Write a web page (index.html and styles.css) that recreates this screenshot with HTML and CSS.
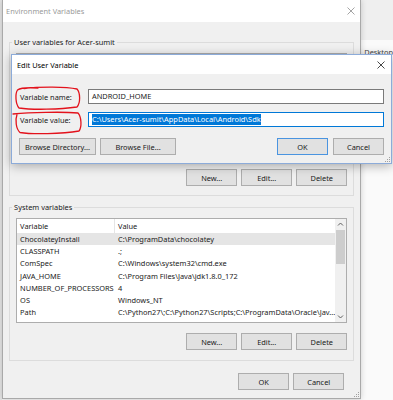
FILE: index.html
```html
<!DOCTYPE html>
<html lang="en">
<head>
    <meta charset="UTF-8">
    <title>Environment Variables</title>
    <link rel="stylesheet" href="styles.css">
</head>
<body>

    <div class="desktop">
        <div class="behind-left"></div>

        <!-- Main "Environment Variables" window (inactive) -->
        <div class="env-window">
            <div class="titlebar">
                <span class="title inactive">Environment Variables</span>
                <svg class="close-x" width="8" height="8" viewBox="0 0 8 8">
                    <path d="M0.5 0.5 L7.5 7.5 M7.5 0.5 L0.5 7.5" stroke="#9a9a9a" stroke-width="0.9"/>
                </svg>
            </div>

            <div class="env-body">
                <div class="group">
                    <div class="group-title">User variables for Acer-sumit</div>
                    <div class="user-list"></div>
                    <div class="btn-row">
                        <button class="btn">New...</button>
                        <button class="btn">Edit...</button>
                        <button class="btn">Delete</button>
                    </div>
                </div>

                <div class="group system-group">
                    <div class="group-title">System variables</div>
                    <div class="sys-list">
                        <div class="list-view">
                            <div class="lv-row lv-head"><span class="c1">Variable</span><span class="c2">Value</span></div>
                            <div class="lv-row selected"><span class="c1">ChocolateyInstall</span><span class="c2">C:\ProgramData\chocolatey</span></div>
                            <div class="lv-row"><span class="c1">CLASSPATH</span><span class="c2">.;</span></div>
                            <div class="lv-row"><span class="c1">ComSpec</span><span class="c2">C:\Windows\system32\cmd.exe</span></div>
                            <div class="lv-row"><span class="c1">JAVA_HOME</span><span class="c2">C:\Program Files\Java\jdk1.8.0_172</span></div>
                            <div class="lv-row"><span class="c1">NUMBER_OF_PROCESSORS</span><span class="c2">4</span></div>
                            <div class="lv-row"><span class="c1">OS</span><span class="c2">Windows_NT</span></div>
                            <div class="lv-row"><span class="c1">Path</span><span class="c2">C:\Python27\;C:\Python27\Scripts;C:\ProgramData\Oracle\Jav...</span></div>
                            <div class="lv-row"><span class="c1">PATHEXT</span><span class="c2">.COM;.EXE;.BAT;.CMD;.VBS;.VBE;.JS;.JSE;.WSF;.WSH;.MSC</span></div>
                        </div>
                        <div class="scrollbar">
                            <svg class="arrow" width="11" height="11" viewBox="0 0 11 11">
                                <path d="M3 6.5 L5.5 4 L8 6.5" fill="none" stroke="#606060" stroke-width="1"/>
                            </svg>
                            <div class="thumb"></div>
                            <div class="track"></div>
                            <svg class="arrow" width="11" height="11" viewBox="0 0 11 11">
                                <path d="M3 4.5 L5.5 7 L8 4.5" fill="none" stroke="#606060" stroke-width="1"/>
                            </svg>
                        </div>
                    </div>
                    <div class="btn-row">
                        <button class="btn">New...</button>
                        <button class="btn">Edit...</button>
                        <button class="btn">Delete</button>
                    </div>
                </div>

                <div class="footer">
                    <button class="btn">OK</button>
                    <button class="btn">Cancel</button>
                </div>
            </div>

            <svg class="grip" width="5" height="5" viewBox="0 0 5 5">
                <rect x="4" y="0" width="1" height="1" fill="#a0a0a0"/>
                <rect x="2" y="2" width="1" height="1" fill="#a0a0a0"/>
                <rect x="4" y="2" width="1" height="1" fill="#a0a0a0"/>
                <rect x="0" y="4" width="1" height="1" fill="#a0a0a0"/>
                <rect x="2" y="4" width="1" height="1" fill="#a0a0a0"/>
                <rect x="4" y="4" width="1" height="1" fill="#a0a0a0"/>
            </svg>
        </div>

        <!-- Whatever window sits behind on the right -->
        <div class="behind-right">
            <div class="behind-top"></div>
            <div class="behind-item">Desktop</div>
        </div>
    </div>

    <!-- Modal "Edit User Variable" dialog on top -->
    <div class="edit-dialog">
        <div class="dlg-title">
            <span class="title">Edit User Variable</span>
            <svg class="close-x" width="8" height="8" viewBox="0 0 8 8">
                <path d="M0.5 0.5 L7.5 7.5 M7.5 0.5 L0.5 7.5" stroke="#333" stroke-width="0.9"/>
            </svg>
        </div>
        <div class="dlg-body">
            <div class="field">
                <label>Variable name:</label>
                <div class="textbox">ANDROID_HOME</div>
            </div>
            <div class="field">
                <label>Variable value:</label>
                <div class="textbox focused"><span class="sel">C:\Users\Acer-sumit\AppData\Local\Android\Sdk</span></div>
            </div>
            <div class="dlg-buttons">
                <button class="btn btn-wide">Browse Directory...</button>
                <button class="btn btn-file">Browse File...</button>
                <button class="btn btn-default">OK</button>
                <button class="btn">Cancel</button>
            </div>
        </div>
        <svg class="grip" width="5" height="5" viewBox="0 0 5 5">
            <rect x="4" y="0" width="1" height="1" fill="#a0a0a0"/>
            <rect x="2" y="2" width="1" height="1" fill="#a0a0a0"/>
            <rect x="4" y="2" width="1" height="1" fill="#a0a0a0"/>
            <rect x="0" y="4" width="1" height="1" fill="#a0a0a0"/>
            <rect x="2" y="4" width="1" height="1" fill="#a0a0a0"/>
            <rect x="4" y="4" width="1" height="1" fill="#a0a0a0"/>
        </svg>
    </div>

    <!-- Red hand-drawn annotation circles -->
    <svg class="marks" width="393" height="400" viewBox="0 0 393 400">
        <path d="M24 88.5 C40 86.5, 66 86.5, 77 89 C80.5 93, 80.5 103, 77 107 C60 109.5, 32 110, 19 108 C15.5 104, 15 94, 17.5 90 C21 87.5, 30 87.5, 38 88"
              fill="none" stroke="#e3121c" stroke-width="1.3" stroke-linecap="round"/>
        <path d="M13 114 C30 112.5, 62 111.5, 78 113 C81.5 117, 82 127, 79 131 C62 134, 32 134.5, 20 132.5 C16 129, 15 120, 17 114.5"
              fill="none" stroke="#e3121c" stroke-width="1.3" stroke-linecap="round"/>
    </svg>

</body>
</html>
```

FILE: styles.css
```css
/* --- Page / desktop --- */
body {
    margin: 0;
    width: 393px;
    height: 400px;
    overflow: hidden;
    position: relative;
    font-family: "Noto Sans", "Liberation Sans", sans-serif;
    font-size: 7.4px;
    color: #1a1a1a;
    background-color: #f2f2f2;
}

.desktop {
    display: flex;
    height: 400px;
}

.behind-left {
    width: 3px;
    background-color: #e4e4e4;
}

.behind-right {
    flex: 1;
    display: flex;
    flex-direction: column;
    background-color: #fafafa;
}

.behind-top {
    height: 40px;
    background-color: #efefef;
}

.behind-item {
    padding: 7px 0 0 3px;
    color: #444;
    white-space: nowrap;
}

/* --- Environment Variables window --- */
.env-window {
    position: relative;
    width: 360px;
    height: 399px;
    box-sizing: border-box;
    border: 1px solid #a9a9a9;
    border-top: none;
    background-color: #f0f0f0;
    display: flex;
    flex-direction: column;
    box-shadow: 0 0 6px rgba(0, 0, 0, 0.18);
}

.titlebar {
    height: 22px;
    flex-shrink: 0;
    background-color: #ffffff;
    display: flex;
    align-items: center;
    justify-content: space-between;
    padding: 0 5px 0 3px;
}

.title.inactive {
    color: #9a9a9a;
}

.env-body {
    flex: 1;
    display: flex;
    flex-direction: column;
    padding: 20px 6px 0;
}

/* group boxes */
.group {
    border: 1px solid #dcdcdc;
    padding: 0 6px 9px;
}

.group-title {
    width: fit-content;
    margin: -6px 0 0 -4px;
    padding: 0 2px;
    line-height: 11px;
    background-color: #f0f0f0;
}

.system-group {
    margin-top: 11px;
    padding-bottom: 10px;
}

.user-list {
    height: 108px;
    margin-top: 5px;
    box-sizing: border-box;
    border: 1px solid #adadad;
    background-color: #ffffff;
}

/* --- List view --- */
.sys-list {
    display: flex;
    height: 105px;
    margin-top: 5px;
    box-sizing: border-box;
    border: 1px solid #adadad;
    background-color: #ffffff;
}

.list-view {
    flex: 1;
    overflow: hidden;
}

.lv-row {
    display: flex;
    height: 12.2px;
    line-height: 12.2px;
    white-space: nowrap;
}

.lv-head {
    height: 14px;
    line-height: 14px;
}

.lv-row.selected {
    background-color: #e5e5e5;
}

.c1 {
    width: 98px;
    flex-shrink: 0;
    box-sizing: border-box;
    padding-left: 3px;
}

.c2 {
    padding-left: 3px;
}

.lv-head .c1 {
    border-right: 1px solid #e5e5e5;
}

.scrollbar {
    width: 11px;
    display: flex;
    flex-direction: column;
    background-color: #f0f0f0;
}

.scrollbar .arrow {
    display: block;
    flex-shrink: 0;
}

.thumb {
    height: 34px;
    margin: 0 1px;
    background-color: #cdcdcd;
}

.track {
    flex: 1;
}

/* --- Buttons --- */
.btn-row {
    display: flex;
    justify-content: flex-end;
    gap: 4px;
    margin-top: 8px;
}

.system-group .btn-row {
    margin-top: 10px;
}

.btn {
    width: 51px;
    height: 17px;
    box-sizing: border-box;
    padding: 0;
    border: 1px solid #adadad;
    background-color: #e1e1e1;
    color: #1a1a1a;
    font: inherit;
}

.footer {
    display: flex;
    justify-content: flex-end;
    gap: 4px;
    margin-top: 12px;
    padding-right: 10px;
}

.grip {
    position: absolute;
    right: 1px;
    bottom: 1px;
}

/* --- Edit User Variable dialog --- */
.edit-dialog {
    position: absolute;
    left: 11px;
    top: 54px;
    width: 381px;
    height: 110px;
    box-sizing: border-box;
    border: 1px solid #8cabd9;
    background-color: #f0f0f0;
    box-shadow: 0 2px 10px rgba(0, 0, 0, 0.3);
}

.dlg-title {
    height: 19px;
    background-color: #ffffff;
    display: flex;
    align-items: center;
    justify-content: space-between;
    padding: 0 6px 0 5px;
    color: #000;
}

.dlg-body {
    padding: 15px 7px 0 7px;
}

.field {
    display: flex;
    align-items: center;
}

.field + .field {
    margin-top: 8px;
}

.field label {
    width: 69px;
    padding-left: 1px;
    box-sizing: border-box;
}

.textbox {
    width: 296px;
    height: 15px;
    box-sizing: border-box;
    border: 1px solid #7a7a7a;
    padding: 0 3px;
    background-color: #ffffff;
    line-height: 13px;
    white-space: nowrap;
}

.textbox.focused {
    border-color: #0078d7;
}

.sel {
    display: inline-block;
    line-height: 11px;
    background-color: #0078d7;
    color: #ffffff;
}

.dlg-buttons {
    display: flex;
    gap: 4px;
    margin-top: 11px;
}

.btn-wide {
    width: 77px;
}

.btn-file {
    width: 76px;
}

.btn-default {
    margin-left: auto;
    margin-right: 1px;
    border-color: #4a94e0;
}

/* --- Annotation overlay --- */
.marks {
    position: absolute;
    left: 0;
    top: 0;
    pointer-events: none;
}
```
